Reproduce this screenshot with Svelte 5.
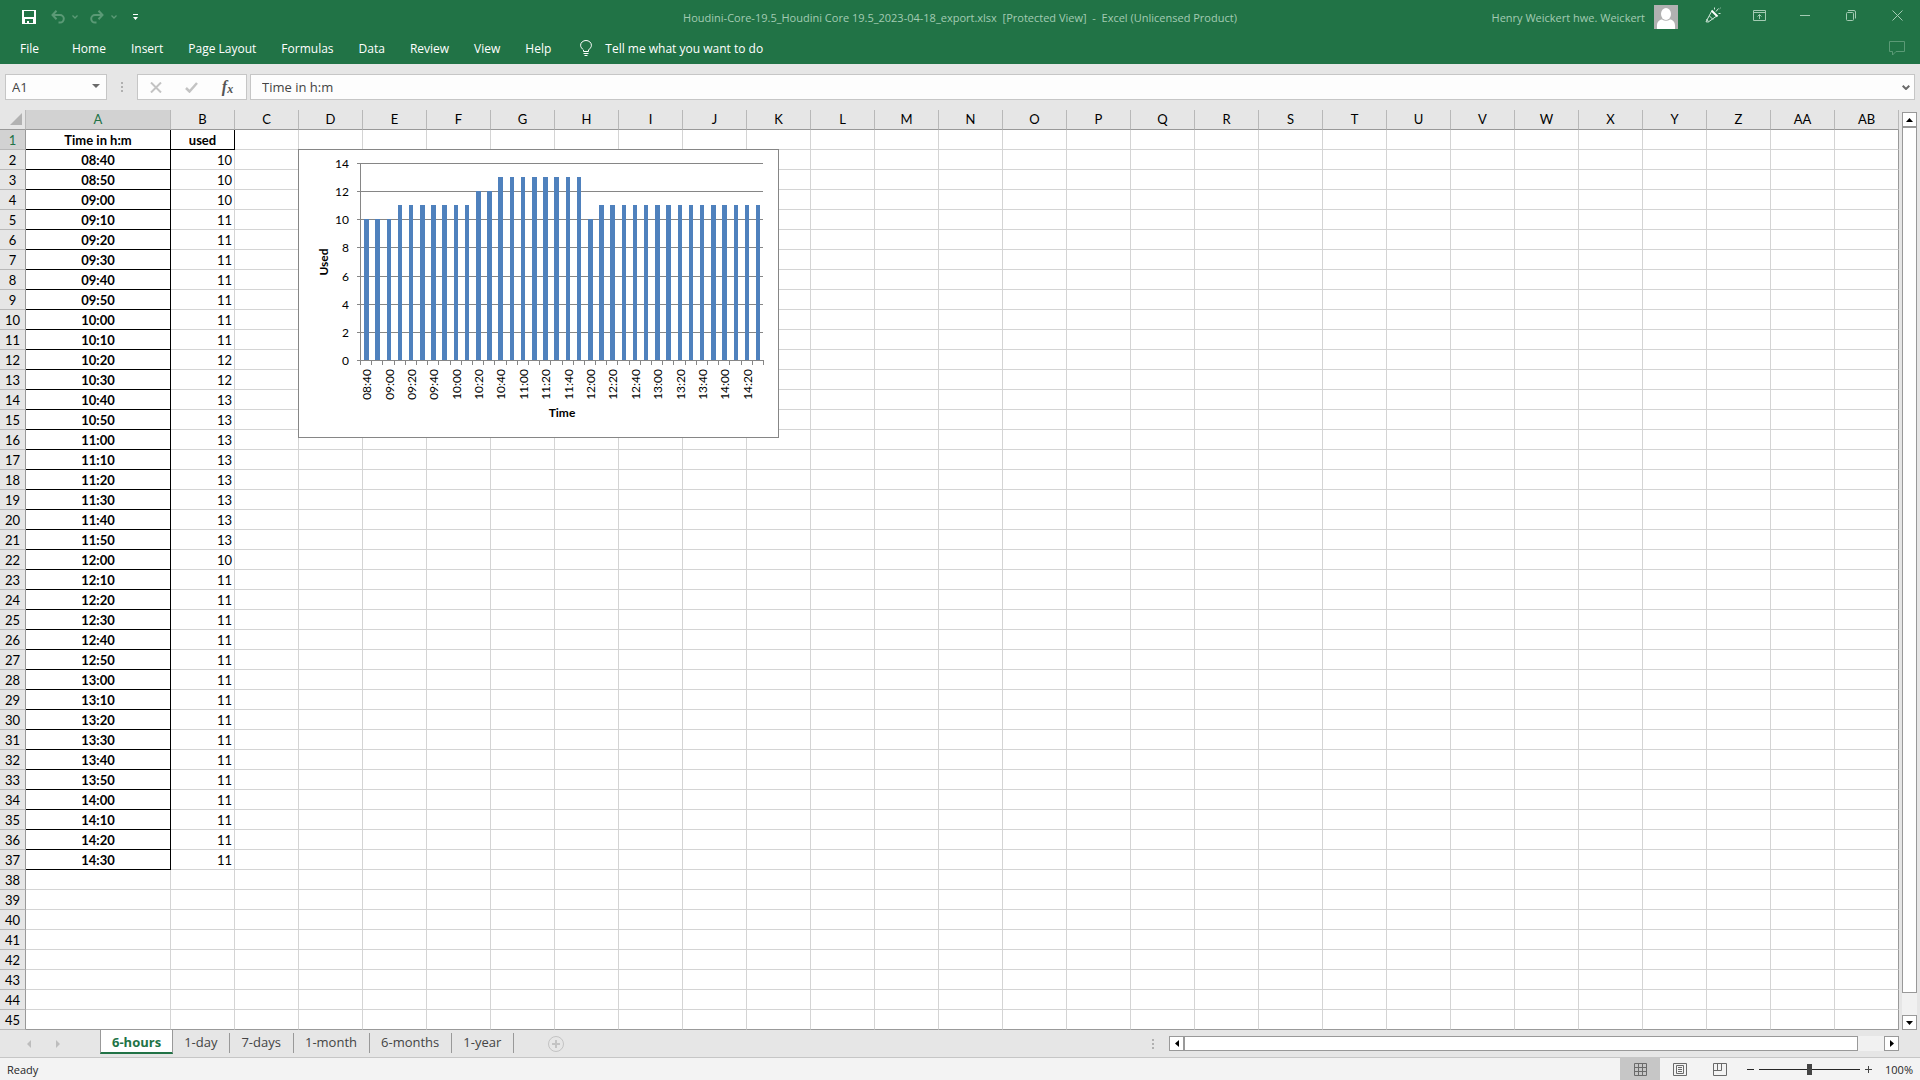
<script lang="ts">
  const menus = ['Home', 'Insert', 'Page Layout', 'Formulas', 'Data', 'Review', 'View', 'Help'];
  const sheets = ['6-hours', '1-day', '7-days', '1-month', '6-months', '1-year'];
  const used = [
    10, 10, 10, 11, 11, 11, 11, 11, 11, 11, 12, 12, 13, 13, 13, 13, 13, 13, 13, 13, 10, 11, 11, 11,
    11, 11, 11, 11, 11, 11, 11, 11, 11, 11, 11, 11,
  ];

  // One sample every ten minutes, starting at 08:40
  const samples = used.map((value, i) => {
    const minutes = 520 + i * 10;
    const hh = String(Math.floor(minutes / 60)).padStart(2, '0');
    const mm = String(minutes % 60).padStart(2, '0');
    return { time: `${hh}:${mm}`, value };
  });

  const letters = 'ABCDEFGHIJKLMNOPQRSTUVWXYZ'.split('');
  const columns = [...letters, 'AA', 'AB'];
  const rows = Array.from({ length: 45 }, (_, i) => i + 1);

  function cellText(row: number, col: number) {
    if (row === 1) return ['Time in h:m', 'used'][col] ?? '';
    const sample = samples[row - 2];
    if (!sample || col > 1) return '';
    return col === 0 ? sample.time : String(sample.value);
  }

  // Chart plot area
  const plot = { left: 62, right: 465, top: 14, bottom: 211 };
  const step = (plot.right - plot.left) / samples.length;
  const yOf = (value: number) =>
    Math.round(plot.bottom - (value * (plot.bottom - plot.top)) / 14);
  const xOf = (i: number) => Math.round(plot.left + i * step);
  const yTicks = [0, 2, 4, 6, 8, 10, 12, 14];

  const bars = samples.map((s, i) => {
    const x = Math.round(plot.left + 1 + i * step + step * 0.28);
    const end = Math.round(plot.left + 1 + i * step + step * 0.68);
    return { x, y: yOf(s.value), width: end - x, height: plot.bottom - yOf(s.value) };
  });

  let activeSheet = $state('6-hours');
  let formula = $state('Time in h:m');
  let cellName = $state('A1');
  let zoom = $state(100);
</script>

<div class="window">
  <header class="titlebar">
    <div class="quick-access">
      <button type="button" aria-label="Save">
        <svg width="14" height="14" viewBox="0 0 14 14">
          <path fill="#fff" fill-rule="evenodd" d="M0 0h14v14H0zM2 1v6h10V1zM3 9v4h2v-2h2v2h4V9z" />
        </svg>
      </button>
      <button type="button" class="undo" aria-label="Undo">
        <svg width="14" height="14" viewBox="0 0 14 14" fill="none" stroke="#5b9a76" stroke-width="2">
          <path d="M1.5 5h7.5a3.8 3.8 0 0 1 0 7.6H7.5M5.5 .8L1.5 5l4 4.2" />
        </svg>
      </button>
      <button type="button" class="caret" aria-label="Undo history">
        <svg width="6" height="4" viewBox="0 0 6 4" fill="none" stroke="#5b9a76" stroke-width="1.3">
          <path d="M.5 .5L3 3 5.5 .5" />
        </svg>
      </button>
      <button type="button" class="redo" aria-label="Redo">
        <svg width="14" height="14" viewBox="0 0 14 14" fill="none" stroke="#5b9a76" stroke-width="2">
          <path d="M12.5 5H5a3.8 3.8 0 0 0 0 7.6h1.5M8.5 .8l4 4.2-4 4.2" />
        </svg>
      </button>
      <button type="button" class="caret" aria-label="Redo history">
        <svg width="6" height="4" viewBox="0 0 6 4" fill="none" stroke="#5b9a76" stroke-width="1.3">
          <path d="M.5 .5L3 3 5.5 .5" />
        </svg>
      </button>
      <button type="button" class="customize" aria-label="Customize Quick Access Toolbar">
        <svg width="5" height="6" viewBox="0 0 5 6" fill="#fff"><path d="M0 0h5v1H0zM0 3h5L2.5 6z" /></svg>
      </button>
    </div>
    <div class="title">
      Houdini-Core-19.5_Houdini Core 19.5_2023-04-18_export.xlsx&nbsp; [Protected View]&nbsp; -&nbsp;
      Excel (Unlicensed Product)
    </div>
    <div class="account">
      <span>Henry Weickert hwe. Weickert</span>
      <svg class="avatar" width="24" height="24" viewBox="0 0 24 24">
        <rect width="24" height="24" fill="#b1b1b1" />
        <ellipse cx="12" cy="9" rx="5" ry="6" fill="#fff" />
        <path fill="#fff" d="M3 24v-3.5C3 17 5.5 14.5 8 14.5c2.5 1.8 5.5 1.8 8 0 2.5 0 5 2.5 5 6V24z" />
      </svg>
      <button type="button" aria-label="Coming soon">
        <svg width="16" height="16" viewBox="0 0 16 16" fill="none" stroke="#d3e9dc">
          <path d="M6.5 4.5L1 14.8 3.3 15 11 9.5M1.5 12l2 2.5M4.5 9l3.5 3.5" />
          <path stroke="#fff" stroke-width="2" d="M6.5 3.5l6 6" />
          <path d="M9.5 .5v2M13.5 1.5l-2.5 3M15.5 1l-.8 .8M13.5 6.5h2" />
        </svg>
      </button>
      <button type="button" aria-label="Ribbon display options">
        <svg width="13" height="11" viewBox="0 0 13 11" fill="none" stroke="#a3cbb3">
          <path d="M.5 .5h12v10H.5zM.5 2.5h12M6.5 9V4.5M4.5 6.5l2-2 2 2" />
        </svg>
      </button>
      <button type="button" aria-label="Minimize">
        <svg width="10" height="11" viewBox="0 0 10 11" fill="none" stroke="#a3cbb3"><path d="M0 5.5h10" /></svg>
      </button>
      <button type="button" aria-label="Restore">
        <svg width="10" height="11" viewBox="0 0 10 11" fill="none" stroke="#a3cbb3">
          <rect x=".5" y="2.5" width="7" height="8" rx="1" />
          <path d="M2 .5h6a1.5 1.5 0 0 1 1.5 1.5v6.5" />
        </svg>
      </button>
      <button type="button" aria-label="Close">
        <svg width="11" height="11" viewBox="0 0 11 11" fill="none" stroke="#a3cbb3">
          <path d="M.5 .5l10 10M10.5 .5l-10 10" />
        </svg>
      </button>
    </div>
  </header>

  <nav class="ribbon">
    <button type="button" class="file">File</button>
    {#each menus as menu}
      <button type="button">{menu}</button>
    {/each}
    <button type="button" class="tell-me">
      <svg width="12" height="16" viewBox="0 0 12 16" fill="none" stroke="#fff">
        <path d="M3.5 11.5V10C2 8.5 .6 7.4 .6 5.2a5.4 4.7 0 0 1 10.8 0C11.4 7.4 10 8.5 8.5 10v1.5zM3.5 13.5h5M4.5 15.5h3" />
      </svg>
      Tell me what you want to do
    </button>
    <button type="button" class="comments" aria-label="Comments">
      <svg width="16" height="15" viewBox="0 0 16 15" fill="none" stroke="#5b9a76">
        <path d="M.5 .5h15v10H7l-3.5 3.5v-3.5h-3z" />
      </svg>
    </button>
  </nav>

  <div class="formula-bar">
    <div class="box name-box">
      <input type="text" aria-label="Name Box" bind:value={cellName} />
      <button type="button" aria-label="Named cells">
        <svg width="8" height="4" viewBox="0 0 8 4" fill="#6a6a6a"><path d="M0 0h8L4 4z" /></svg>
      </button>
    </div>
    <span class="grip"></span>
    <div class="box actions">
      <button type="button" aria-label="Cancel">
        <svg width="12" height="11" viewBox="0 0 12 11" fill="none" stroke="#c3c3c3" stroke-width="2">
          <path d="M1 .5l10 10M11 .5l-10 10" />
        </svg>
      </button>
      <button type="button" aria-label="Enter">
        <svg width="13" height="11" viewBox="0 0 13 11" fill="none" stroke="#c3c3c3" stroke-width="2.5">
          <path d="M1 6l3.5 3.5L12 1" />
        </svg>
      </button>
      <button type="button" class="fx" aria-label="Insert Function"><i>f</i><i class="sub">x</i></button>
    </div>
    <div class="box formula">
      <input type="text" aria-label="Formula Bar" bind:value={formula} />
      <button type="button" aria-label="Expand Formula Bar">
        <svg width="8" height="5" viewBox="0 0 8 5" fill="none" stroke="#6a6a6a" stroke-width="2">
          <path d="M.7 .7L4 4 7.3 .7" />
        </svg>
      </button>
    </div>
  </div>

  <main class="workspace">
    <div class="sheet">
      <table>
        <colgroup>
          <col class="col-rows" />
          <col class="col-a" />
          {#each columns.slice(1) as _}
            <col class="col-default" />
          {/each}
        </colgroup>
        <thead>
          <tr>
            <th class="corner" aria-label="Select all">
              <svg width="12" height="12" viewBox="0 0 12 12" fill="#b2b2b2"><path d="M12 0v12H0z" /></svg>
            </th>
            {#each columns as column, c}
              <th scope="col" class:selected={c === 0}>{column}</th>
            {/each}
          </tr>
        </thead>
        <tbody>
          {#each rows as row}
            <tr>
              <th scope="row" class:selected={row === 1}>{row}</th>
              {#each columns as _, c}
                <td
                  class:label={(c === 0 && row <= 37) || (c === 1 && row === 1)}
                  class:number={c === 1 && row > 1}>{cellText(row, c)}</td
                >
              {/each}
            </tr>
          {/each}
        </tbody>
      </table>

      <svg class="chart" width="481" height="289" viewBox="0 0 481 289" role="img" aria-label="Used over time">
        <rect x=".5" y=".5" width="480" height="288" fill="#fff" stroke="#868686" />
        <g stroke="#868686" shape-rendering="crispEdges">
          {#each yTicks as tick}
            <line x1={plot.left - 3} x2={plot.right} y1={yOf(tick) + 0.5} y2={yOf(tick) + 0.5} />
          {/each}
          <line x1={plot.left + 0.5} x2={plot.left + 0.5} y1={plot.top} y2={plot.bottom} />
          {#each Array.from({ length: samples.length + 1 }) as _, i}
            <line x1={xOf(i) + 0.5} x2={xOf(i) + 0.5} y1={plot.bottom} y2={plot.bottom + 5} />
          {/each}
        </g>
        {#each bars as bar}
          <rect x={bar.x} y={bar.y} width={bar.width} height={bar.height} fill="#4f81bd" />
        {/each}
        {#each yTicks as tick}
          <text x="51" y={yOf(tick) + 5} text-anchor="end">{tick}</text>
        {/each}
        {#each samples as sample, i}
          {#if i % 2 === 0}
            <text text-anchor="end" transform="translate({bars[i].x + 7} 220) rotate(-90)">{sample.time}</text>
          {/if}
        {/each}
        <text class="axis-title" text-anchor="middle" transform="translate(30 113) rotate(-90)">Used</text>
        <text class="axis-title" text-anchor="middle" x="264" y="268">Time</text>
      </svg>
    </div>

    <div class="scroll vertical">
      <button type="button" aria-label="Scroll up">
        <svg width="7" height="4" viewBox="0 0 7 4"><path d="M3.5 0L7 4H0z" /></svg>
      </button>
      <div class="track"><div class="thumb"></div></div>
      <button type="button" aria-label="Scroll down">
        <svg width="7" height="4" viewBox="0 0 7 4"><path d="M3.5 4L7 0H0z" /></svg>
      </button>
    </div>
  </main>

  <div class="sheet-bar">
    <div class="sheet-nav">
      <button type="button" aria-label="Previous sheet">
        <svg width="4" height="8" viewBox="0 0 4 8" fill="#bdbdbd"><path d="M4 0v8L0 4z" /></svg>
      </button>
      <button type="button" aria-label="Next sheet">
        <svg width="4" height="8" viewBox="0 0 4 8" fill="#bdbdbd"><path d="M0 0v8l4-4z" /></svg>
      </button>
    </div>
    <div class="tabs">
      {#each sheets as sheet}
        <button type="button" class:active={sheet === activeSheet} onclick={() => (activeSheet = sheet)}>
          {sheet}
        </button>
      {/each}
    </div>
    <button type="button" class="add-sheet" aria-label="New sheet">
      <svg width="16" height="16" viewBox="0 0 16 16" fill="none" stroke="#c3c3c3">
        <circle cx="8" cy="8" r="7.5" />
        <path stroke-width="2" d="M8 4v8M4 8h8" />
      </svg>
    </button>
    <span class="grip"></span>
    <div class="scroll horizontal">
      <button type="button" aria-label="Scroll left">
        <svg width="4" height="7" viewBox="0 0 4 7"><path d="M4 0v7L0 3.5z" /></svg>
      </button>
      <div class="track"><div class="thumb"></div></div>
      <button type="button" aria-label="Scroll right">
        <svg width="4" height="7" viewBox="0 0 4 7"><path d="M0 0v7l4-3.5z" /></svg>
      </button>
    </div>
  </div>

  <footer class="status-bar">
    <span class="ready">Ready</span>
    <div class="views">
      <button type="button" class="active" aria-label="Normal">
        <svg width="13" height="13" viewBox="0 0 13 13" fill="none" stroke="#6a6a6a">
          <path d="M.5 .5h12v12H.5zM4.5 .5v12M8.5 .5v12M.5 4.5h12M.5 8.5h12" />
        </svg>
      </button>
      <button type="button" aria-label="Page Layout">
        <svg width="14" height="13" viewBox="0 0 14 13" fill="none" stroke="#6a6a6a">
          <path d="M.5 .5h13v12H.5zM3.5 2.5h7v8h-7zM5 4.5h4M5 6.5h4M5 8.5h4" />
        </svg>
      </button>
      <button type="button" aria-label="Page Break Preview">
        <svg width="14" height="13" viewBox="0 0 14 13" fill="none" stroke="#6a6a6a">
          <path d="M.5 .5h13v12H.5zM.5 7.5h8v-7M4.5 .5v7" />
        </svg>
      </button>
    </div>
    <div class="zoom">
      <button type="button" aria-label="Zoom out">
        <svg width="7" height="7" viewBox="0 0 7 7" stroke="#262626"><path d="M0 3.5h7" /></svg>
      </button>
      <input type="range" min="10" max="190" aria-label="Zoom" bind:value={zoom} />
      <button type="button" aria-label="Zoom in">
        <svg width="7" height="7" viewBox="0 0 7 7" stroke="#444"><path d="M0 3.5h7M3.5 0v7" /></svg>
      </button>
      <span class="zoom-value">{zoom}%</span>
    </div>
  </footer>
</div>

<style>
  :global(body) {
    margin: 0;
  }

  .window {
    display: flex;
    flex-direction: column;
    min-height: 100vh;
    overflow: hidden;
    background: #e6e6e6;
    color: #262626;
    font-family: 'Open Sans', 'Noto Sans', sans-serif;
    font-size: 11px;
  }

  button {
    display: flex;
    align-items: center;
    justify-content: center;
    padding: 0;
    border: none;
    background: none;
    color: inherit;
    font: inherit;
    white-space: nowrap;
    flex-shrink: 0;
  }

  svg {
    display: block;
  }

  /* Title bar */
  .titlebar {
    display: grid;
    grid-template-columns: 1fr auto 1fr;
    align-items: center;
    height: 34px;
    background: #217346;
    color: #a3cbb3;
    white-space: nowrap;
  }

  .quick-access {
    display: flex;
    align-items: center;
    padding-left: 22px;
  }

  .undo {
    margin-left: 15px;
  }

  .redo {
    margin-left: 12px;
  }

  .caret {
    margin-left: 7px;
  }

  .customize {
    margin-left: 16px;
  }

  .account {
    display: flex;
    align-items: center;
    justify-content: flex-end;
  }

  .account button {
    width: 46px;
    height: 30px;
    padding-bottom: 4px;
  }

  .avatar {
    margin: 0 12px 0 9px;
  }

  /* Ribbon tabs */
  .ribbon {
    display: flex;
    align-items: center;
    height: 30px;
    padding: 0 15px 0 7px;
    background: #217346;
    color: #fff;
    font-size: 12px;
  }

  .ribbon button {
    height: 30px;
    padding: 0 12px 2px 13px;
  }

  .ribbon .file {
    margin-right: 8px;
  }

  .ribbon .tell-me {
    gap: 13px;
    padding-left: 17px;
  }

  .ribbon .comments {
    margin-left: auto;
    padding: 0 0 2px;
  }

  /* Formula bar */
  .formula-bar {
    display: flex;
    align-items: center;
    height: 26px;
    padding: 10px 5px;
    color: #444;
    font-size: 13px;
  }

  .box {
    display: flex;
    align-items: center;
    box-sizing: border-box;
    height: 26px;
    border: 1px solid #c6c6c6;
    background: #fdfdfd;
  }

  .box input {
    flex: 1;
    min-width: 0;
    padding: 0 0 0 6px;
    border: none;
    outline: none;
    background: none;
    color: #444;
    font: inherit;
  }

  .name-box {
    width: 102px;
  }

  .name-box button {
    width: 20px;
    padding-bottom: 2px;
  }

  .grip {
    width: 2px;
    height: 10px;
    background: repeating-linear-gradient(#b0b0b0 0 2px, transparent 2px 4px);
  }

  .formula-bar .grip {
    margin: 0 14px;
  }

  .actions {
    width: 110px;
    justify-content: space-around;
  }

  .fx {
    width: 14px;
    color: #555;
    font-family: 'Liberation Serif', serif;
    font-size: 16px;
    font-weight: bold;
    line-height: 18px;
  }

  .fx .sub {
    padding-top: 3px;
    font-size: 12px;
  }

  .formula {
    flex: 1;
    margin-left: 3px;
  }

  .formula input {
    padding-left: 11px;
  }

  .formula button {
    width: 16px;
  }

  /* Grid */
  .workspace {
    display: flex;
    flex: 1;
    gap: 3px;
    padding-right: 3px;
  }

  .sheet {
    position: relative;
    flex: 1;
    box-sizing: border-box;
    overflow: hidden;
    min-width: 0;
    color: #000;
    font-family: Lato, 'Open Sans', sans-serif;
    font-size: 13px;
  }

  table {
    width: 1899px;
    border-collapse: separate;
    border-spacing: 0;
    table-layout: fixed;
  }

  .col-rows {
    width: 26px;
  }

  .col-a {
    width: 145px;
  }

  .col-default {
    width: 64px;
  }

  th,
  td {
    box-sizing: border-box;
    height: 20px;
    padding: 1px 2px 0;
    overflow: hidden;
    line-height: 18px;
    white-space: nowrap;
  }

  th {
    border-right: 1px solid #b8b8b8;
    border-bottom: 1px solid #999;
    background: #e6e6e6;
    font-weight: normal;
    text-align: center;
  }

  thead th {
    padding: 0 2px 1px;
  }

  tbody th {
    border-right-color: #999;
    border-bottom-color: #b8b8b8;
  }

  .corner svg {
    margin-left: 8px;
  }

  th.selected {
    background: #d2d2d2;
    color: #217346;
  }

  td {
    border-right: 1px solid #d4d4d4;
    border-bottom: 1px solid #d4d4d4;
    background: #fff;
  }

  td:last-child {
    border-right-color: #999;
  }

  tbody tr:last-child td {
    border-bottom-color: #999;
  }

  td.label {
    border-color: #000;
    font-weight: bold;
    text-align: center;
  }

  td.number {
    text-align: right;
  }

  .chart {
    position: absolute;
    left: 298px;
    top: 39px;
    font-size: 12px;
  }

  .axis-title {
    font-weight: bold;
  }

  /* Scrollbars */
  .scroll {
    display: flex;
  }

  .scroll button {
    box-sizing: border-box;
    width: 15px;
    height: 15px;
    border: 1px solid #999;
    background: #fff;
  }

  .track {
    display: flex;
    flex: 1;
    background: #f1f1f1;
  }

  .thumb {
    box-sizing: border-box;
    border: 1px solid #999;
    background: #fff;
  }

  .vertical {
    flex-direction: column;
    width: 15px;
    padding-top: 2px;
  }

  .vertical .track {
    flex-direction: column;
  }

  .vertical .thumb {
    height: calc(100% - 22px);
  }

  .horizontal {
    width: 730px;
  }

  .horizontal .thumb {
    width: calc(100% - 26px);
  }

  /* Sheet tabs */
  .sheet-bar {
    display: flex;
    align-items: center;
    height: 27px;
    padding-right: 21px;
    border-bottom: 1px solid #c6c6c6;
    color: #444;
    font-size: 13px;
  }

  .sheet-nav {
    display: flex;
    width: 100px;
  }

  .sheet-nav button {
    width: 29px;
  }

  .sheet-nav button:first-child {
    margin-left: 14px;
  }

  .tabs {
    display: flex;
    align-self: flex-start;
  }

  .tabs button {
    box-sizing: border-box;
    height: 20px;
    margin-top: 3px;
    padding: 0 12px 2px 11px;
    border-right: 1px solid #999;
  }

  .tabs button.active {
    height: 25px;
    margin-top: -1px;
    padding: 2px 11px 0;
    border-right: 1px solid #999;
    border-bottom: 2px solid #217346;
    border-left: 1px solid #999;
    background: #fff;
    color: #217346;
    font-weight: bold;
  }

  .add-sheet {
    margin-left: 34px;
  }

  .sheet-bar .grip {
    margin: 0 15px 0 auto;
  }

  /* Status bar */
  .status-bar {
    display: flex;
    align-items: center;
    height: 22px;
    padding-right: 7px;
    background: #f3f3f3;
  }

  .ready {
    flex: 1;
    padding-left: 7px;
  }

  .views {
    display: flex;
  }

  .views button {
    width: 40px;
    height: 22px;
  }

  .views button.active {
    background: #c6c6c6;
  }

  .zoom {
    display: flex;
    align-items: center;
    gap: 5px;
    padding-left: 7px;
  }

  .zoom input {
    width: 101px;
    height: 11px;
    margin: 0;
    appearance: none;
    background: linear-gradient(#262626, #262626) center / 100% 1px no-repeat;
  }

  .zoom input::-webkit-slider-thumb {
    width: 5px;
    height: 11px;
    appearance: none;
    background: #444;
  }

  .zoom-value {
    width: 36px;
    text-align: right;
  }
</style>
